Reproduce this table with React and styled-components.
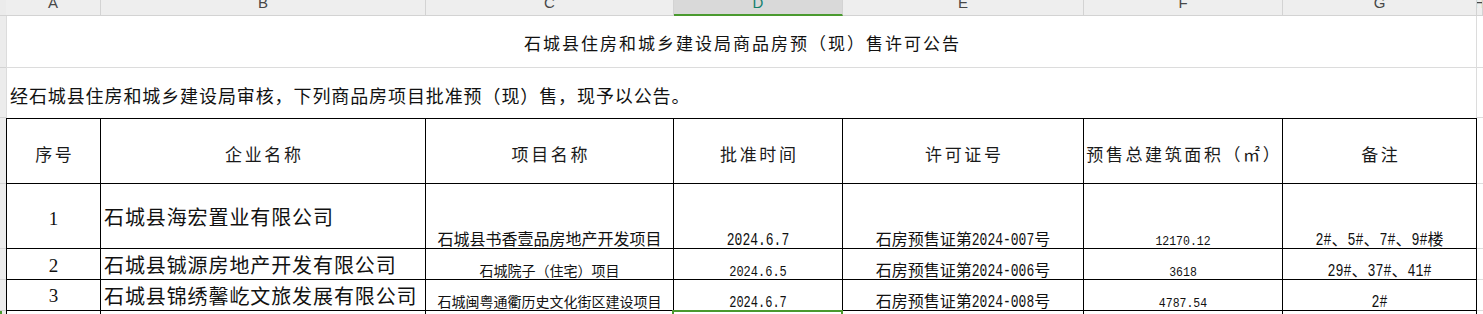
import React from "react";
import styled, { createGlobalStyle, css } from "styled-components";

const GRID = "#dcdcdc";
const HEAD_LINE = "#d3d3d3";
const GREEN = "#4a9a2f";
const INK = "#111111";

const GlobalStyle = createGlobalStyle`
  *, *::before, *::after { box-sizing: border-box; }
  html, body { margin: 0; padding: 0; overflow: hidden; background: #ffffff; }
  body { font-family: "Noto Sans CJK SC", "Noto Sans", sans-serif; color: ${INK}; }
  #root { width: 1483px; height: 314px; overflow: hidden; }
`;

const Sheet = styled.div`
  display: grid;
  grid-template-columns: 6px 95px 325px 248px 169px 241px 199px 194px 1fr;
  grid-template-rows: 16px 52px 50px 66px 65px 31px 31px 34px;
  width: 1483px;
  height: 314px;
  overflow: hidden;
  background: #ffffff;
`;

const Corner = styled.div`
  background: #ebebeb;
  border-bottom: 1px solid ${HEAD_LINE};
`;

const ColHead = styled.div`
  display: flex;
  justify-content: center;
  align-items: flex-start;
  overflow: hidden;
  background: ${(p) => (p.$active ? "#d9d9d9" : "#eeeeee")};
  border-right: 1px solid ${HEAD_LINE};
  border-bottom: ${(p) => (p.$active ? `2px solid ${GREEN}` : `1px solid ${HEAD_LINE}`)};
`;

const ColLetter = styled.span`
  font-family: "Liberation Sans", "Noto Sans", sans-serif;
  font-size: 15px;
  line-height: 16px;
  margin-top: -5px;
  color: ${(p) => (p.$active ? "#14806d" : "#474747")};
`;

const RowHead = styled.div`
  background: #ececec;
  border-bottom: 1px solid ${HEAD_LINE};
  ${(p) => p.$mark && css`box-shadow: inset 2px 0 0 ${GREEN};`}
`;

const MergedCell = styled.div`
  grid-column: 2 / 9;
  display: flex;
  align-items: center;
  justify-content: ${(p) => (p.$center ? "center" : "flex-start")};
  padding: ${(p) => p.$pad};
  border-left: 1px solid ${GRID};
  border-right: 1px solid ${GRID};
  border-bottom: ${(p) => (p.$open ? "none" : `1px solid ${GRID}`)};
  font-size: ${(p) => p.$fs}px;
  letter-spacing: ${(p) => p.$ls}px;
  white-space: nowrap;
  color: ${INK};
`;

const Spare = styled.div`
  border-bottom: 1px solid ${GRID};
  background: #ffffff;
`;

const TCell = styled.div`
  position: relative;
  display: flex;
  align-items: ${(p) => (p.$v === "end" ? "flex-end" : "center")};
  justify-content: ${(p) => (p.$left ? "flex-start" : "center")};
  padding: ${(p) => p.$pad || "0"};
  border-right: 1px solid #000;
  border-bottom: 1px solid #000;
  ${(p) => p.$first && css`border-left: 1px solid #000;`}
  ${(p) => p.$top && css`border-top: 1px solid #000;`}
  white-space: nowrap;
  color: ${INK};
`;

const Selection = styled.div`
  position: absolute;
  top: -1px;
  left: -2px;
  right: -1px;
  height: 40px;
  border: 2px solid ${GREEN};
  pointer-events: none;
`;

const HeadText = styled.span`
  font-size: 17px;
  letter-spacing: 2.6px;
  padding-left: 2.6px;
  line-height: 24px;
  color: #1a1a1a;
`;

const SerialText = styled.span`
  font-family: "Liberation Serif", "DejaVu Serif", serif;
  font-size: 19px;
  line-height: 22px;
`;

const CompanyText = styled.span`
  font-size: 20px;
  letter-spacing: 0.9px;
  line-height: 24px;
`;

const ProjectText = styled.span`
  font-size: ${(p) => p.$fs}px;
  line-height: ${(p) => p.$lh}px;
`;

const MixedText = styled.span`
  font-size: 16px;
  line-height: ${(p) => p.$lh || 20}px;
`;

const Num = styled.span`
  display: inline-block;
  font-family: "Liberation Mono", "DejaVu Sans Mono", monospace;
  font-size: ${(p) => p.$fs}px;
  line-height: 1;
  letter-spacing: 0;
  transform: scaleY(${(p) => p.$sy});
  transform-origin: 50% 78%;
`;

function Mixed({ text, fs, sy }) {
  const parts = text.split(/([\x20-\x7e]+)/).filter(Boolean);
  return parts.map((part, i) =>
    /^[\x20-\x7e]+$/.test(part) ? (
      <Num key={i} $fs={fs} $sy={sy}>
        {part}
      </Num>
    ) : (
      <React.Fragment key={i}>{part}</React.Fragment>
    )
  );
}

const COLUMNS = ["A", "B", "C", "D", "E", "F", "G", "H"];

const HEADERS = ["序号", "企业名称", "项目名称", "批准时间", "许可证号", "预售总建筑面积（㎡）", "备注"];

const ROWS = [
  {
    no: "1",
    noPad: "6px 0 0 0",
    company: "石城县海宏置业有限公司",
    project: "石城县书香壹品房地产开发项目",
    pfs: 16,
    plh: 19,
    date: "2024.6.7",
    dfs: 13,
    dsy: 1.45,
    permit: "石房预售证第2024-007号",
    area: "12170.12",
    note: "2#、5#、7#、9#楼",
  },
  {
    no: "2",
    noPad: "3px 0 0 0",
    company: "石城县铖源房地产开发有限公司",
    project: "石城院子（住宅）项目",
    pfs: 14,
    plh: 17,
    date: "2024.6.5",
    dfs: 12,
    dsy: 1.2,
    permit: "石房预售证第2024-006号",
    area: "3618",
    note: "29#、37#、41#",
  },
  {
    no: "3",
    noPad: "1px 0 0 0",
    company: "石城县锦绣馨屹文旅发展有限公司",
    project: "石城闽粤通衢历史文化街区建设项目",
    pfs: 14,
    plh: 17,
    date: "2024.6.7",
    dfs: 12,
    dsy: 1.3,
    permit: "石房预售证第2024-008号",
    area: "4787.54",
    note: "2#",
  },
];

export default function App() {
  return (
    <>
      <GlobalStyle />
      <Sheet>
        <Corner />
        {COLUMNS.map((c) => (
          <ColHead key={c} $active={c === "D"}>
            <ColLetter $active={c === "D"}>{c}</ColLetter>
          </ColHead>
        ))}

        <RowHead />
        <MergedCell $center $fs={17} $ls={2} $pad="2px 0 0 2px">
          石城县住房和城乡建设局商品房预（现）售许可公告
        </MergedCell>
        <Spare />

        <RowHead />
        <MergedCell $open $fs={18} $ls={0.9} $pad="3px 0 0 3px">
          经石城县住房和城乡建设局审核，下列商品房项目批准预（现）售，现予以公告。
        </MergedCell>
        <Spare />

        <RowHead />
        {HEADERS.map((h, i) => (
          <TCell key={h} $top $first={i === 0} $pad="6px 0 0 0">
            <HeadText>{h}</HeadText>
          </TCell>
        ))}
        <Spare />

        {ROWS.map((r) => (
          <React.Fragment key={r.no}>
            <RowHead />
            <TCell $first $pad={r.noPad}>
              <SerialText>{r.no}</SerialText>
            </TCell>
            <TCell $left $pad="2px 0 0 3px">
              <CompanyText>{r.company}</CompanyText>
            </TCell>
            <TCell $v="end">
              <ProjectText $fs={r.pfs} $lh={r.plh}>
                {r.project}
              </ProjectText>
            </TCell>
            <TCell $v="end">
              <MixedText>
                <Num $fs={r.dfs} $sy={r.dsy}>
                  {r.date}
                </Num>
              </MixedText>
            </TCell>
            <TCell $v="end">
              <MixedText>
                <Mixed text={r.permit} fs={13} sy={1.4} />
              </MixedText>
            </TCell>
            <TCell $v="end">
              <MixedText>
                <Num $fs={11.5} $sy={1.15}>
                  {r.area}
                </Num>
              </MixedText>
            </TCell>
            <TCell $v="end">
              <MixedText>
                <Mixed text={r.note} fs={13.3} sy={1.35} />
              </MixedText>
            </TCell>
            <Spare />
          </React.Fragment>
        ))}

        <RowHead $mark />
        <TCell $first />
        <TCell />
        <TCell />
        <TCell>
          <Selection />
        </TCell>
        <TCell />
        <TCell />
        <TCell />
        <Spare />
      </Sheet>
    </>
  );
}
